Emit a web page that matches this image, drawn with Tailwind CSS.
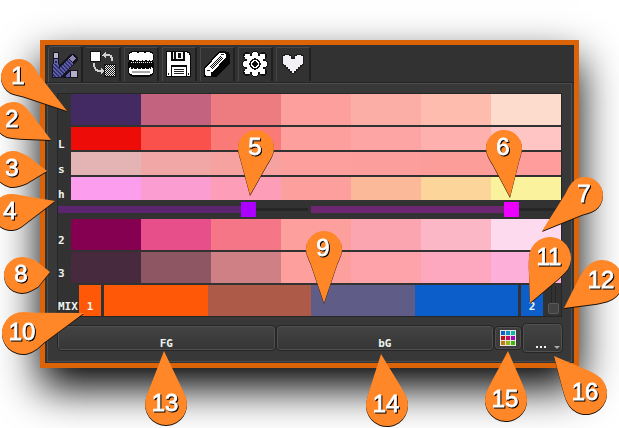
<!DOCTYPE html>
<html lang="en">
<head>
<meta charset="utf-8">
<meta name="viewport" content="width=device-width, initial-scale=1">
<title>Palette mixer</title>
<script src="https://cdn.jsdelivr.net/npm/@tailwindcss/browser@4"></script>
</head>
<body class="relative min-h-screen overflow-hidden bg-white p-10 font-['DejaVu_Sans_Mono',monospace] text-[11px] leading-[10px] font-bold text-[#eef4f0]">

<main class="border-5 border-[#db6408] bg-[#323232] pb-px shadow-[0_20px_40px_0_#000]">
  <nav class="flex h-[38px] items-end gap-[3px] border-b border-[#262626] px-[3px]" role="tablist" aria-label="Sections">
    <button role="tab" aria-selected="true" aria-label="Mixer" class="flex h-9 w-[35px] items-center justify-center rounded-t-sm border-t border-r-2 border-l border-t-[#4d4d4d] border-r-[#202020] border-l-[#4d4d4d] bg-[#353535]">
      <svg class="size-[26px] shrink-0" viewBox="0 0 26 26" shape-rendering="crispEdges">
        <defs><pattern id="blue" width="4" height="4" patternUnits="userSpaceOnUse"><rect width="4" height="4" fill="#30306a"/><path d="M0 0h2v1H0zM1 1h2v1H1zM2 2h2v1H2zM0 3h1v1H0zM3 3h1v1H3z" fill="#5f5fae"/></pattern></defs>
        <path d="M1 0h6v12h1L18 2h4l4 4v3L16 18h10v8H0V12h1z" fill="#161620"/>
        <path d="M1 12h6v4l9-9 5 5-12 13H1z" fill="url(#blue)"/>
        <path d="M2 1h4v5H2z" fill="#bbb2cc"/><path d="M2 7h4v5H2z" fill="#6c68ad"/><path d="M3 9h2v2H3z" fill="#292955"/>
        <path d="M20 3h1v1h1v1h1v1h1v1h-1v1h-1v1h-1v1h-1V9h-1V8h-1V7h-1V6h1V5h1V4h1z" fill="#9187b2"/>
        <path d="M14 24l4-5v6h-4z" fill="#5f5fae"/><path d="M19 19h6v6h-6z" fill="#b6adc8"/>
      </svg>
    </button>
    <button role="tab" aria-selected="false" aria-label="Swap" class="flex h-[34px] w-[35px] items-center justify-center self-center border-t border-r-2 border-t-[#484848] border-r-[#202020]">
      <svg class="size-[26px] shrink-0" viewBox="0 0 26 26" shape-rendering="crispEdges">
        <defs><pattern id="check" width="2" height="2" patternUnits="userSpaceOnUse"><path d="M0 0h1v1H0zM1 1h1v1H1z" fill="#eee"/></pattern></defs>
        <path d="M0 0h11v11H0zM14 13h12v13H14z" fill="#161616"/><path d="M1 1h9v9H1z" fill="#fff"/>
        <path d="M15 14h10v11H15z" fill="url(#check)"/>
        <path d="M12 4h1V3h1V2h1V1h1v2h4v1h2v2h1v4h-2V7h-1V5h-4v2h-1V6h-1V5h-2zM3 12h2v4h1v2h2v1h3v-2h1v1h1v1h1v2h-1v1h-1v1h-1v-2H7v-1H5v-2H4v-2H3z" fill="#cfcfcf"/>
      </svg>
    </button>
    <button role="tab" aria-selected="false" aria-label="Dither" class="flex h-[34px] w-[35px] items-center justify-center self-center border-t border-r-2 border-l border-t-[#484848] border-r-[#202020] border-l-[#484848]">
      <svg class="size-[26px] shrink-0" viewBox="0 0 26 26" shape-rendering="crispEdges">
        <path d="M3 0h20v1h2v3h1v5h-1v2h1v11h-1v2h-1v1h-2v1H4v-1H2v-1H1v-2H0V11h1V9H0V4h1V1h2z" fill="#090909"/>
        <path d="M4 1h5v1h2V1h5v1h2V1h4v1h2v1h1v6h-1v1h-2V9h-1v1h-2V9h-2v1h-2V9h-1v1h-3V9h-1v1H8V9H6v1H4V9H1V3h1V2h2z" fill="#fff"/>
        <path d="M2 11h22v1H2zM4 13h1v1H4zM8 13h1v1H8zM12 13h1v1h-1zM16 13h1v1h-1zM20 13h1v1h-1z" fill="url(#check)"/>
        <path d="M1 17h1v-1h1v2h2v-1h1v1h3v-1h1v1h3v-1h1v1h3v-1h1v1h3v-1h1v1h1v-2h1v1h1v5h-1v1h-2v1H4v-1H2v-1H1z" fill="#fff"/>
        <path d="M4 20h18v2H4z" fill="#aaa"/>
      </svg>
    </button>
    <button role="tab" aria-selected="false" aria-label="Save" class="flex h-[34px] w-[35px] items-center justify-center self-center border-t border-r-2 border-l border-t-[#484848] border-r-[#202020] border-l-[#484848]">
      <svg class="size-[26px] shrink-0" viewBox="0 0 26 26" shape-rendering="crispEdges">
        <path d="M0 0h22v1h2v2h1v23H0z" fill="#090909"/><path d="M1 1h4v9h14V1h2v1h2v2h1v21h-3V14H5v11H1z" fill="#fff"/>
        <path d="M5 10h14v4H5z" fill="#fff"/><path d="M7 1h10v7H7z" fill="#f5f5f5"/><path d="M12 2h3v5h-3zM8 1h2v7H8z" fill="#111"/>
        <path d="M6 16h14v9H6z" fill="#fff"/><path d="M8 18h10v1H8zM8 20h10v1H8zM8 22h10v1H8z" fill="#222"/><path d="M2 22h1v2H2zM22 22h1v2h-1z" fill="#111"/>
      </svg>
    </button>
    <button role="tab" aria-selected="false" aria-label="Erase" class="flex h-[34px] w-[35px] items-center justify-center self-center border-t border-r-2 border-l border-t-[#484848] border-r-[#202020] border-l-[#484848]">
      <svg class="size-[26px] shrink-0" viewBox="0 0 26 26" shape-rendering="crispEdges">
        <path d="M15 0h7v1h3v2h1v9L12 26H0v-9z" fill="#050505"/>
        <path d="M1 18L15 2h5l2 2v2L9 21H7v4H2l-1-1z" fill="#fff"/>
        <path d="M6 15L16 5l3 2L8 18z" fill="#111"/>
        <path d="M6 15L16 5l3 2L8 18z" fill="url(#check)"/>
        <path d="M3 19h3v1H3zM17 3h3v1h-3z" fill="#222"/>
      </svg>
    </button>
    <button role="tab" aria-selected="false" aria-label="Settings" class="flex h-[34px] w-[35px] items-center justify-center self-center border-t border-r-2 border-l border-t-[#484848] border-r-[#202020] border-l-[#484848]">
      <svg class="size-[26px] shrink-0" viewBox="0 0 26 26" shape-rendering="crispEdges">
        <g fill="#111"><circle cx="13" cy="13" r="11"/><circle cx="13" cy="4" r="4"/><circle cx="13" cy="22" r="4"/><circle cx="4" cy="13" r="4"/><circle cx="22" cy="13" r="4"/><circle cx="5" cy="5" r="4"/><circle cx="21" cy="5" r="4"/><circle cx="5" cy="21" r="4"/><circle cx="21" cy="21" r="4"/></g>
        <g fill="#fff"><circle cx="13" cy="13" r="9"/><circle cx="13" cy="3.500" r="3"/><circle cx="13" cy="22.500" r="3"/><circle cx="3.500" cy="13" r="3"/><circle cx="22.500" cy="13" r="3"/><circle cx="5.500" cy="5.500" r="3"/><circle cx="20.500" cy="5.500" r="3"/><circle cx="5.500" cy="20.500" r="3"/><circle cx="20.500" cy="20.500" r="3"/></g>
        <circle cx="13" cy="13" r="5" fill="none" stroke="#111" stroke-width="1.500"/>
        <path d="M12 10h2v1h1v1h1v2h-1v1h-1v1h-2v-1h-1v-1h-1v-2h1v-1h1z" fill="#111"/>
      </svg>
    </button>
    <button role="tab" aria-selected="false" aria-label="Support" class="flex h-[34px] w-[35px] items-center justify-center self-center border-t border-r-2 border-l border-t-[#484848] border-r-[#202020] border-l-[#484848]">
      <svg class="size-[26px] shrink-0" viewBox="0 0 26 26" shape-rendering="crispEdges">
        <path d="M4 3h6v1h2v2h2V4h2V3h6v1h2v10h-2v2h-2v2h-2v2h-2v2h-2v1h-2v-1h-2v-2H8v-2H6v-2H4v-2H2V4h2z" fill="#1b1b1b"/>
        <path d="M5 4h4v1h2v3h4V5h2V4h4v1h2v8h-1v1h-2v2h-2v2h-2v2h-2v2h-2v-2h-2v-2H8v-2H6v-2H4v-1H3V5h2z" fill="#f2f0f5"/>
      </svg>
    </button>
  </nav>

  <section class="mx-[2px] border border-[#4d4d4d] bg-[#383838] p-[9px]">
    <div class="flex flex-col border border-[#262626] bg-[#323232]">
      <div class="flex flex-col gap-[2px]">
        <div class="flex h-[31px] pl-[13px]">
          <div class="flex-1 bg-[#432a62]"></div><div class="flex-1 bg-[#c4637f]"></div><div class="flex-1 bg-[#ed7c80]"></div><div class="flex-1 bg-[#fd9f9c]"></div><div class="flex-1 bg-[#fbaea5]"></div><div class="flex-1 bg-[#febcaf]"></div><div class="flex-1 bg-[#fddbcd]"></div>
        </div>
        <div class="flex h-[23px]">
          <span class="w-[13px] self-end">L</span>
          <div class="flex-1 bg-[#ee0c08]"></div><div class="flex-1 bg-[#fb514c]"></div><div class="flex-1 bg-[#fa7a77]"></div><div class="flex-1 bg-[#fd9f9c]"></div><div class="flex-1 bg-[#fda5a4]"></div><div class="flex-1 bg-[#fdb0ae]"></div><div class="flex-1 bg-[#ffc5c5]"></div>
        </div>
        <div class="flex h-[23px]">
          <span class="w-[13px] self-end">s</span>
          <div class="flex-1 bg-[#e4b4b5]"></div><div class="flex-1 bg-[#f1a7a6]"></div><div class="flex-1 bg-[#f5a2a1]"></div><div class="flex-1 bg-[#fd9f9c]"></div><div class="flex-1 bg-[#fc9e9b]"></div><div class="flex-1 bg-[#fc9d9a]"></div><div class="flex-1 bg-[#fe9d9b]"></div>
        </div>
        <div class="flex h-[23px]">
          <span class="w-[13px] self-end">h</span>
          <div class="flex-1 bg-[#fc9dee]"></div><div class="flex-1 bg-[#fc9dd2]"></div><div class="flex-1 bg-[#fd9db7]"></div><div class="flex-1 bg-[#fd9f9c]"></div><div class="flex-1 bg-[#fcb99a]"></div><div class="flex-1 bg-[#fcd59a]"></div><div class="flex-1 bg-[#faf29c]"></div>
        </div>
      </div>

      <div class="flex h-[19px] items-center gap-[3px]">
        <input type="range" min="0" max="100" value="78" aria-label="Left hue" class="h-[15px] min-w-0 flex-1 appearance-none bg-[linear-gradient(#5b2570,#5b2570),linear-gradient(#262626,#262626)] [background-position:0_50%,0_50%] [background-size:78%_7px,100%_3px] bg-no-repeat [&::-webkit-slider-thumb]:size-[15px] [&::-webkit-slider-thumb]:appearance-none [&::-webkit-slider-thumb]:bg-[#ab00ff]">
        <input type="range" min="0" max="100" value="82" aria-label="Right hue" class="h-[15px] min-w-0 flex-1 appearance-none bg-[linear-gradient(#6d2672,#6d2672),linear-gradient(#262626,#262626)] [background-position:0_50%,0_50%] [background-size:80%_7px,100%_3px] bg-no-repeat [&::-webkit-slider-thumb]:size-[15px] [&::-webkit-slider-thumb]:appearance-none [&::-webkit-slider-thumb]:bg-[#ee00ff]">
      </div>

      <div class="flex flex-col gap-[2px]">
        <div class="flex h-[31px]">
          <span class="w-[13px] self-end pb-1">2</span>
          <div class="flex-1 bg-[#850050]"></div><div class="flex-1 bg-[#e64f8a]"></div><div class="flex-1 bg-[#f57687]"></div><div class="flex-1 bg-[#fd9f9c]"></div><div class="flex-1 bg-[#faa5b0]"></div><div class="flex-1 bg-[#fcb7c7]"></div><div class="flex-1 bg-[#fddaee]"></div>
        </div>
        <div class="flex h-[31px]">
          <span class="w-[13px] self-end pb-1">3</span>
          <div class="flex-1 bg-[#482a3e]"></div><div class="flex-1 bg-[#8d5662]"></div><div class="flex-1 bg-[#cf8085]"></div><div class="flex-1 bg-[#fd9f9c]"></div><div class="flex-1 bg-[#ffa3ab]"></div><div class="flex-1 bg-[#fea8bf]"></div><div class="flex-1 bg-[#fdaed9]"></div>
        </div>
        <div class="flex h-[31px] gap-[3px]">
          <div class="flex">
            <span class="w-[21px] self-end pb-1">MIX</span>
            <button class="flex w-[22px] items-end justify-center bg-[#ff5907] pb-1">1</button>
          </div>
          <div class="flex flex-1">
            <div class="flex-1 bg-[#ff5907]"></div><div class="flex-1 bg-[#ae5a49]"></div><div class="flex-1 bg-[#5f5d88]"></div><div class="flex-1 bg-[#0c5ecb]"></div>
          </div>
          <div class="flex">
            <button class="flex w-[22px] items-end justify-center bg-[#0c5ecb] pb-1">2</button>
            <div class="flex w-[18px] justify-center pt-px pb-[2px] pl-[2px]">
              <input type="range" min="0" max="100" value="0" aria-label="Mix amount" class="h-full w-[11px] appearance-none bg-[linear-gradient(90deg,#262626_1px,#323232_1px,#323232_4px,#262626_4px)] [background-position:50%_0] [background-size:5px_100%] bg-no-repeat [direction:rtl] [writing-mode:vertical-lr] [&::-webkit-slider-thumb]:size-[11px] [&::-webkit-slider-thumb]:appearance-none [&::-webkit-slider-thumb]:rounded-[2px] [&::-webkit-slider-thumb]:border [&::-webkit-slider-thumb]:border-[#5a5a5a] [&::-webkit-slider-thumb]:bg-[#434343]">
            </div>
          </div>
        </div>
      </div>
    </div>

    <div class="mt-[7px] flex items-center gap-[2px] pl-px">
      <button class="flex h-6 flex-1 items-end justify-center rounded-[3px] border border-[#505050] bg-linear-to-b from-[#434343] to-[#363636] outline outline-[#262626]">FG</button>
      <button class="flex h-6 flex-1 items-end justify-center rounded-[3px] border border-[#505050] bg-linear-to-b from-[#434343] to-[#363636] outline outline-[#262626]">bG</button>
      <button aria-label="Palette" class="flex h-[22px] w-[26px] items-center justify-center rounded-[3px] border border-[#505050] bg-[#3d3d3d] outline outline-[#262626]">
        <svg class="size-4" viewBox="0 0 16 16" shape-rendering="crispEdges">
          <path d="M0 0h16v16H0z" fill="#e8e4e4"/>
          <path d="M1 1h4v4H1z" fill="#0c5ecb"/><path d="M6 1h4v4H6z" fill="#0c90c8"/><path d="M11 1h4v4h-4z" fill="#0cb8a8"/>
          <path d="M1 6h4v4H1z" fill="#bd1010"/><path d="M6 6h4v4H6z" fill="#bf1058"/><path d="M11 6h4v4h-4z" fill="#a008b8"/>
          <path d="M1 11h4v4H1z" fill="#c07c10"/><path d="M6 11h4v4H6z" fill="#94b810"/><path d="M11 11h4v4h-4z" fill="#40b810"/>
        </svg>
      </button>
      <button aria-label="More" class="flex h-7 w-[39px] items-end justify-end gap-2 rounded-[3px] border border-[#505050] bg-linear-to-b from-[#434343] to-[#363636] pr-px outline outline-[#262626]">
        <span class="flex h-[5px] gap-[2px]" aria-hidden="true"><i class="size-[2px] bg-[#eef4f0]"></i><i class="size-[2px] bg-[#eef4f0]"></i><i class="size-[2px] bg-[#eef4f0]"></i></span>
        <svg class="mb-[2px] h-[3px] w-[6px]" viewBox="0 0 6 3"><path d="M0 0h6L3 3z" fill="#aaa"/></svg>
      </button>
    </div>
  </section>
</main>

<svg id="pins" class="pointer-events-none absolute top-0 left-0 h-[428px] w-[619px] overflow-visible font-['Liberation_Sans',sans-serif] text-[24px] font-normal" viewBox="0 0 619 428" aria-label="Numbered callouts"></svg>

<script>
  // Each pin: centre x, centre y, tip x, tip y. Two-digit pins use a larger head.
  const pins = [
    [19, 77, 67, 111], [13, 120, 51, 140], [13, 169, 47, 171], [11, 212, 55, 201],
    [256, 148, 250, 195], [504, 148, 510, 197], [585, 195, 542, 231], [22, 275, 50, 272],
    [324, 249, 324, 303], [23, 333, 84, 313], [550, 258, 530, 303], [602, 281, 564, 308],
    [166, 404, 164, 351], [387, 405, 381, 354], [506, 400, 508, 351], [586, 393, 554, 356]
  ];
  document.getElementById('pins').innerHTML = pins.map(([x, y, tx, ty], i) => {
    const r = i < 9 ? 18 : 21, d = Math.hypot(tx - x, ty - y);
    const angle = Math.atan2(x - tx, ty - y) * 180 / Math.PI;
    const a = r * .94, b = r * .34, c = r * .74, e = r * .82;
    const path = `M${-a} ${b}A${r} ${r} 0 1 1 ${a} ${b}Q${a - 1} ${b + 3} ${c} ${e}L0 ${d}L${-c} ${e}Q${1 - a} ${b + 3} ${-a} ${b}Z`;
    const label = `x="${x - 1}" y="${y + 7}" text-anchor="middle"`;
    return `<g><path d="${path}" transform="translate(${x} ${y + 1}) rotate(${angle})" fill="#1d120a"/>` +
      `<path d="${path}" transform="translate(${x} ${y}) rotate(${angle})" fill="#ff8728"/>` +
      `<text ${label} fill="#fff" stroke="#fff" stroke-width=".8" style="filter:drop-shadow(1px 1px 0 #000)">${i + 1}</text></g>`;
  }).join('');
</script>
</body>
</html>
